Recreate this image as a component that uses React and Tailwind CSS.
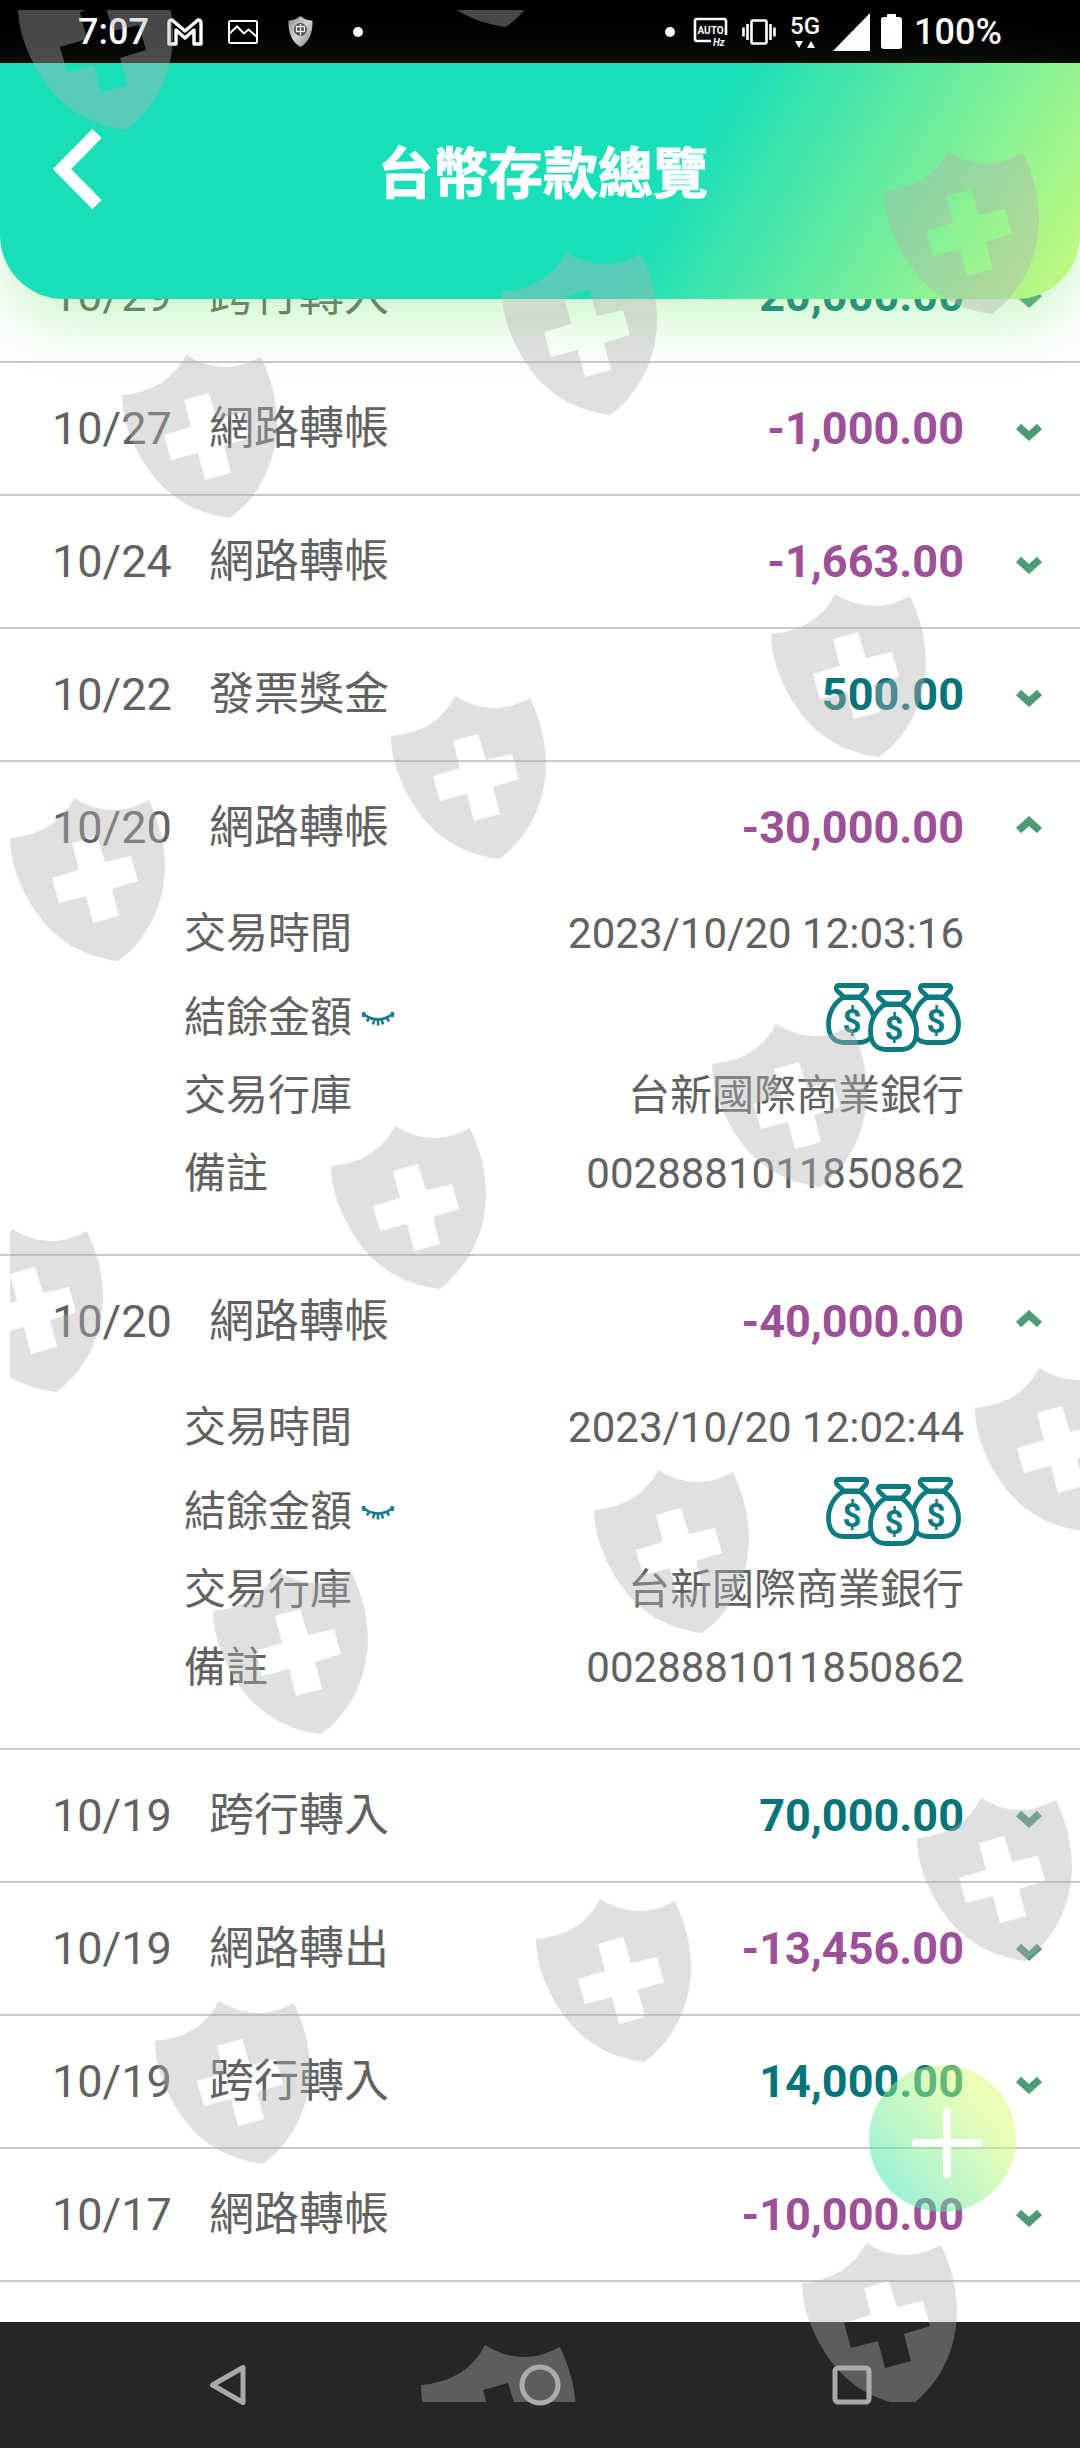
import React, { useState } from "react";

const TRANSACTIONS = [
  { id: 1, date: "10/29", label: "跨行轉入", amount: "20,000.00" },
  { id: 2, date: "10/27", label: "網路轉帳", amount: "-1,000.00" },
  { id: 3, date: "10/24", label: "網路轉帳", amount: "-1,663.00" },
  { id: 4, date: "10/22", label: "發票獎金", amount: "500.00" },
  {
    id: 5,
    date: "10/20",
    label: "網路轉帳",
    amount: "-30,000.00",
    time: "2023/10/20 12:03:16",
    bank: "台新國際商業銀行",
    memo: "0028881011850862",
  },
  {
    id: 6,
    date: "10/20",
    label: "網路轉帳",
    amount: "-40,000.00",
    time: "2023/10/20 12:02:44",
    bank: "台新國際商業銀行",
    memo: "0028881011850862",
  },
  { id: 7, date: "10/19", label: "跨行轉入", amount: "70,000.00" },
  { id: 8, date: "10/19", label: "網路轉出", amount: "-13,456.00" },
  { id: 9, date: "10/19", label: "跨行轉入", amount: "14,000.00" },
  { id: 10, date: "10/17", label: "網路轉帳", amount: "-10,000.00" },
];

const SHIELDS = [
  [18, -33], [398, -136], [884, 151], [502, 252], [122, 355], [771, 594],
  [391, 696], [10, 798], [712, 1024], [331, 1126], [-52, 1229], [975, 1368],
  [594, 1470], [213, 1571], [917, 1798], [536, 1899], [155, 2001],
  [802, 2243], [421, 2345],
];

function StatusBar() {
  return (
    <div className="flex h-[63px] shrink-0 items-center justify-between bg-black px-[78px] text-[36px] leading-none font-medium text-white">
      <div className="flex items-center">
        <span>7:07</span>
        <svg className="ml-[18px]" width="36" height="28" viewBox="0 0 36 28" fill="none" stroke="#fff" strokeWidth="3.4" strokeLinejoin="round">
          <path d="M2 5Q2 2 5 2L18 13L31 2Q34 2 34 5V26H27V12L18 20L9 12V26H2Z" />
        </svg>
        <svg className="ml-[25px]" width="30" height="24" viewBox="0 0 30 24" fill="none" stroke="#fff" strokeWidth="2">
          <rect x="1" y="1" width="28" height="22" rx="1.5" />
          <path d="M1.500 13.500L9 6.500L16 13.500L20.500 9.500L28.500 16.500" />
        </svg>
        <svg className="ml-[30px]" width="25" height="31" viewBox="0 0 25 31">
          <defs>
            <linearGradient id="badge" x1="0" y1="0" x2="1" y2="1">
              <stop offset="0" stopColor="#8b8b8b" />
              <stop offset="0.5" stopColor="#d6d6d6" />
              <stop offset="1" stopColor="#777" />
            </linearGradient>
          </defs>
          <path d="M12.500 0C16 3 20 4.500 24.500 4.500C25 17 21 26 12.500 31C4 26 0 17 .5 4.500C5 4.500 9 3 12.500 0Z" fill="url(#badge)" />
          <circle cx="12.500" cy="13.500" r="6.500" fill="#4b4b4b" />
          <path d="M8.500 10.500V15.500H16.500V10.500ZM12.500 8V19.500" fill="none" stroke="#eee" strokeWidth="1.300" />
        </svg>
        <span className="ml-10 size-[10px] rounded-full bg-white" />
      </div>
      <div className="flex items-center">
        <span className="size-[10px] rounded-full bg-white" />
        <svg className="ml-[18px]" width="36" height="36" viewBox="0 -3 36 36" fill="none" stroke="#fff" strokeWidth="2.600">
          <path d="M33 18V4Q33 2 31 2H4Q2 2 2 4V22Q2 24 4 24H18" />
          <text x="17.500" y="17" textAnchor="middle" fontSize="10" fontWeight="700" fill="#fff" stroke="none">AUTO</text>
          <text x="20" y="29" fontSize="10" fontWeight="700" fontStyle="italic" fill="#fff" stroke="none">Hz</text>
        </svg>
        <svg className="ml-[13px]" width="34" height="26" viewBox="0 0 34 26" fill="none" stroke="#fff" strokeWidth="2.600">
          <rect x="9.500" y="1.500" width="15" height="23" rx="1.500" />
          <path d="M5.500 5V21M28.500 5V21M1.500 8.500V17.500M32.500 8.500V17.500" />
        </svg>
        <span className="ml-[14px] flex flex-col items-center gap-1 text-[24px] leading-[22px]">
          5G
          <svg width="20" height="7" viewBox="0 0 20 7" fill="#fff">
            <path d="M0 0H8L4 7ZM12 7H20L16 0Z" />
          </svg>
        </span>
        <svg className="ml-[13px]" width="38" height="38" viewBox="0 0 38 38" fill="#fff">
          <path d="M37 0V38H0Z" />
        </svg>
        <svg className="ml-[10px]" width="21" height="35" viewBox="0 0 21 35" fill="#fff">
          <path d="M6 3V1Q6 0 7 0H14Q15 0 15 1V3H18Q21 3 21 6V32Q21 35 18 35H3Q0 35 0 32V6Q0 3 3 3Z" />
        </svg>
        <span className="ml-3">100%</span>
      </div>
    </div>
  );
}

function Header() {
  return (
    <header className="relative z-10 grid h-[236px] shrink-0 grid-cols-[1fr_auto_1fr] items-center rounded-b-[64px] bg-[linear-gradient(120deg,#19dfb9_61%,#c8fb7f_100%)] px-[52px] pb-6 shadow-[0_26px_60px_rgba(130,235,120,0.38)]">
      <button type="button" aria-label="返回" className="w-[50px]">
        <svg width="50" height="80" viewBox="0 0 50 80" fill="none" stroke="#fff" strokeWidth="13">
          <path d="M45 4.500L10 40L45 75.500" />
        </svg>
      </button>
      <h1 className="pt-[10px] pl-[6px] text-[55px] leading-[72px] font-bold text-white [-webkit-text-stroke:1px_white]">
        台幣存款總覽
      </h1>
    </header>
  );
}

function MoneyBag({ x, y }) {
  return (
    <g transform={`translate(${x} ${y})`}>
      <path d="M17 14.500C8 20 2.500 30 2.500 41C2.500 54 9 59.500 18 59.500H33C42 59.500 48.500 54 48.500 41C48.500 30 42 20 34 14.500Z" />
      <path d="M12 2.500H39Q42 4 40 7.500L34 14H18L11 7.500Q9 4 12 2.500Z" />
      <text x="26" y="49.500" textAnchor="middle" fontSize="33" fontWeight="700" fill="#0d7a80" stroke="none">$</text>
    </g>
  );
}

function MoneyBags() {
  return (
    <svg role="img" aria-label="金額已隱藏" className="mr-0.5" width="136" height="70" viewBox="0 0 136 70" fill="#fff" stroke="#0d7a80" strokeWidth="4.800" strokeLinejoin="round">
      <MoneyBag x={0} y={0} />
      <MoneyBag x={84} y={0} />
      <MoneyBag x={42} y={7} />
    </svg>
  );
}

function ClosedEye() {
  return (
    <svg width="34" height="15" viewBox="0 0 34 15" fill="none" stroke="#1a7a8c" strokeWidth="2.600">
      <path d="M1 2Q17 15 33 2M3.500 1L2 6M8.500 6L6 10.500M13.500 8L12 13.500M17 8.500V14.500M20.500 8L22 13.500M25.500 6L28 10.500M30.500 1L32 6" />
    </svg>
  );
}

function Chevron({ open }) {
  return (
    <svg className={open ? "rotate-180" : ""} width="30" height="30" viewBox="0 0 30 30" fill="none" stroke="#4e9a77" strokeWidth="7.500">
      <path d="M4.500 12.500L15 22L25.500 12.500" />
    </svg>
  );
}

function DetailRow({ label, children }) {
  return (
    <div className="flex h-[78px] items-center justify-between first:mb-[6px]">
      <dt className="flex items-center gap-[9px]">{label}</dt>
      <dd>{children}</dd>
    </div>
  );
}

function Transaction({ item }) {
  const [open, setOpen] = useState(Boolean(item.time));
  const tone = item.amount.startsWith("-") ? "text-[#9b5098]" : "text-[#05747a]";
  return (
    <li className="border-b-2 border-[#c9c9c9]">
      <button
        type="button"
        aria-expanded={open}
        onClick={() => setOpen(!open)}
        className="flex h-[131px] w-full items-center pr-9 pl-[52px] text-left text-[45px] leading-[60px]"
      >
        <span className="w-[157px]">{item.date}</span>
        <span className="flex-1">{item.label}</span>
        <span className={`mr-[50px] font-bold ${tone}`}>{item.amount}</span>
        <Chevron open={open} />
      </button>
      {open && item.time && (
        <dl className="pt-0.5 pr-[116px] pb-[41px] pl-[184px] text-[42px] leading-[56px]">
          <DetailRow label="交易時間">{item.time}</DetailRow>
          <DetailRow
            label={
              <>
                結餘金額
                <button type="button" aria-label="顯示結餘金額">
                  <ClosedEye />
                </button>
              </>
            }
          >
            <MoneyBags />
          </DetailRow>
          <DetailRow label="交易行庫">{item.bank}</DetailRow>
          <DetailRow label="備註">{item.memo}</DetailRow>
        </dl>
      )}
    </li>
  );
}

function AddButton() {
  return (
    <button
      type="button"
      aria-label="新增"
      className="absolute right-16 bottom-[110px] flex size-[147px] items-center justify-center rounded-full bg-[linear-gradient(50deg,rgba(25,223,185,0.5)_0%,rgba(216,253,112,0.5)_75%)] pt-2 pl-2"
    >
      <svg width="70" height="70" viewBox="0 0 70 70" fill="none" stroke="#fff" strokeWidth="8" strokeLinecap="round">
        <path d="M35 4V66M4 35H66" />
      </svg>
    </button>
  );
}

function NavBar() {
  return (
    <nav className="grid h-[126px] shrink-0 grid-cols-3 items-center justify-items-center bg-[#262626] px-18">
      <button type="button" aria-label="上一頁">
        <svg width="42" height="42" viewBox="0 0 42 42" fill="none" stroke="#a9a9a9" strokeWidth="5" strokeLinejoin="round">
          <path d="M36 3.500V38.500L5.500 21Z" />
        </svg>
      </button>
      <button type="button" aria-label="主畫面">
        <svg width="42" height="42" viewBox="0 0 42 42" fill="none" stroke="#a9a9a9" strokeWidth="5">
          <circle cx="21" cy="21" r="18" />
        </svg>
      </button>
      <button type="button" aria-label="最近使用">
        <svg width="40" height="40" viewBox="0 0 40 40" fill="none" stroke="#a9a9a9" strokeWidth="5">
          <rect x="3" y="3" width="34" height="34" rx="3" />
        </svg>
      </button>
    </nav>
  );
}

function ShieldPattern() {
  return (
    <svg aria-hidden="true" className="pointer-events-none absolute inset-0 z-20 h-full w-full">
      <defs>
        <path
          id="shield"
          fillRule="evenodd"
          d="M64 0Q101 23 139 2C149 24 155 44 155 70C154 108 137 142 108 163C70 158 42 140 22 108C8 85 0 62 0 40Q46 36 64 0ZM62 45L87 38L95 64L121 58L128 83L102 91L109 118L83 125L76 98L49 105L42 80L69 72Z"
        />
        <clipPath id="bounds">
          <rect x="10" y="10" width="1070" height="2392" />
        </clipPath>
      </defs>
      <g clipPath="url(#bounds)" fill="rgba(177,177,177,0.4)">
        {SHIELDS.map(([x, y]) => (
          <use key={`${x}-${y}`} href="#shield" x={x} y={y} />
        ))}
      </g>
    </svg>
  );
}

export default function App() {
  return (
    <div className="relative flex min-h-screen flex-col overflow-hidden bg-white font-[Roboto,'Noto_Sans_CJK_TC',sans-serif] text-[#616161]">
      <StatusBar />
      <Header />
      <main className="relative -mt-[69px] flex-1 pb-[39px]">
        <ul>
          {TRANSACTIONS.map((item) => (
            <Transaction key={item.id} item={item} />
          ))}
        </ul>
        <AddButton />
      </main>
      <NavBar />
      <ShieldPattern />
    </div>
  );
}
